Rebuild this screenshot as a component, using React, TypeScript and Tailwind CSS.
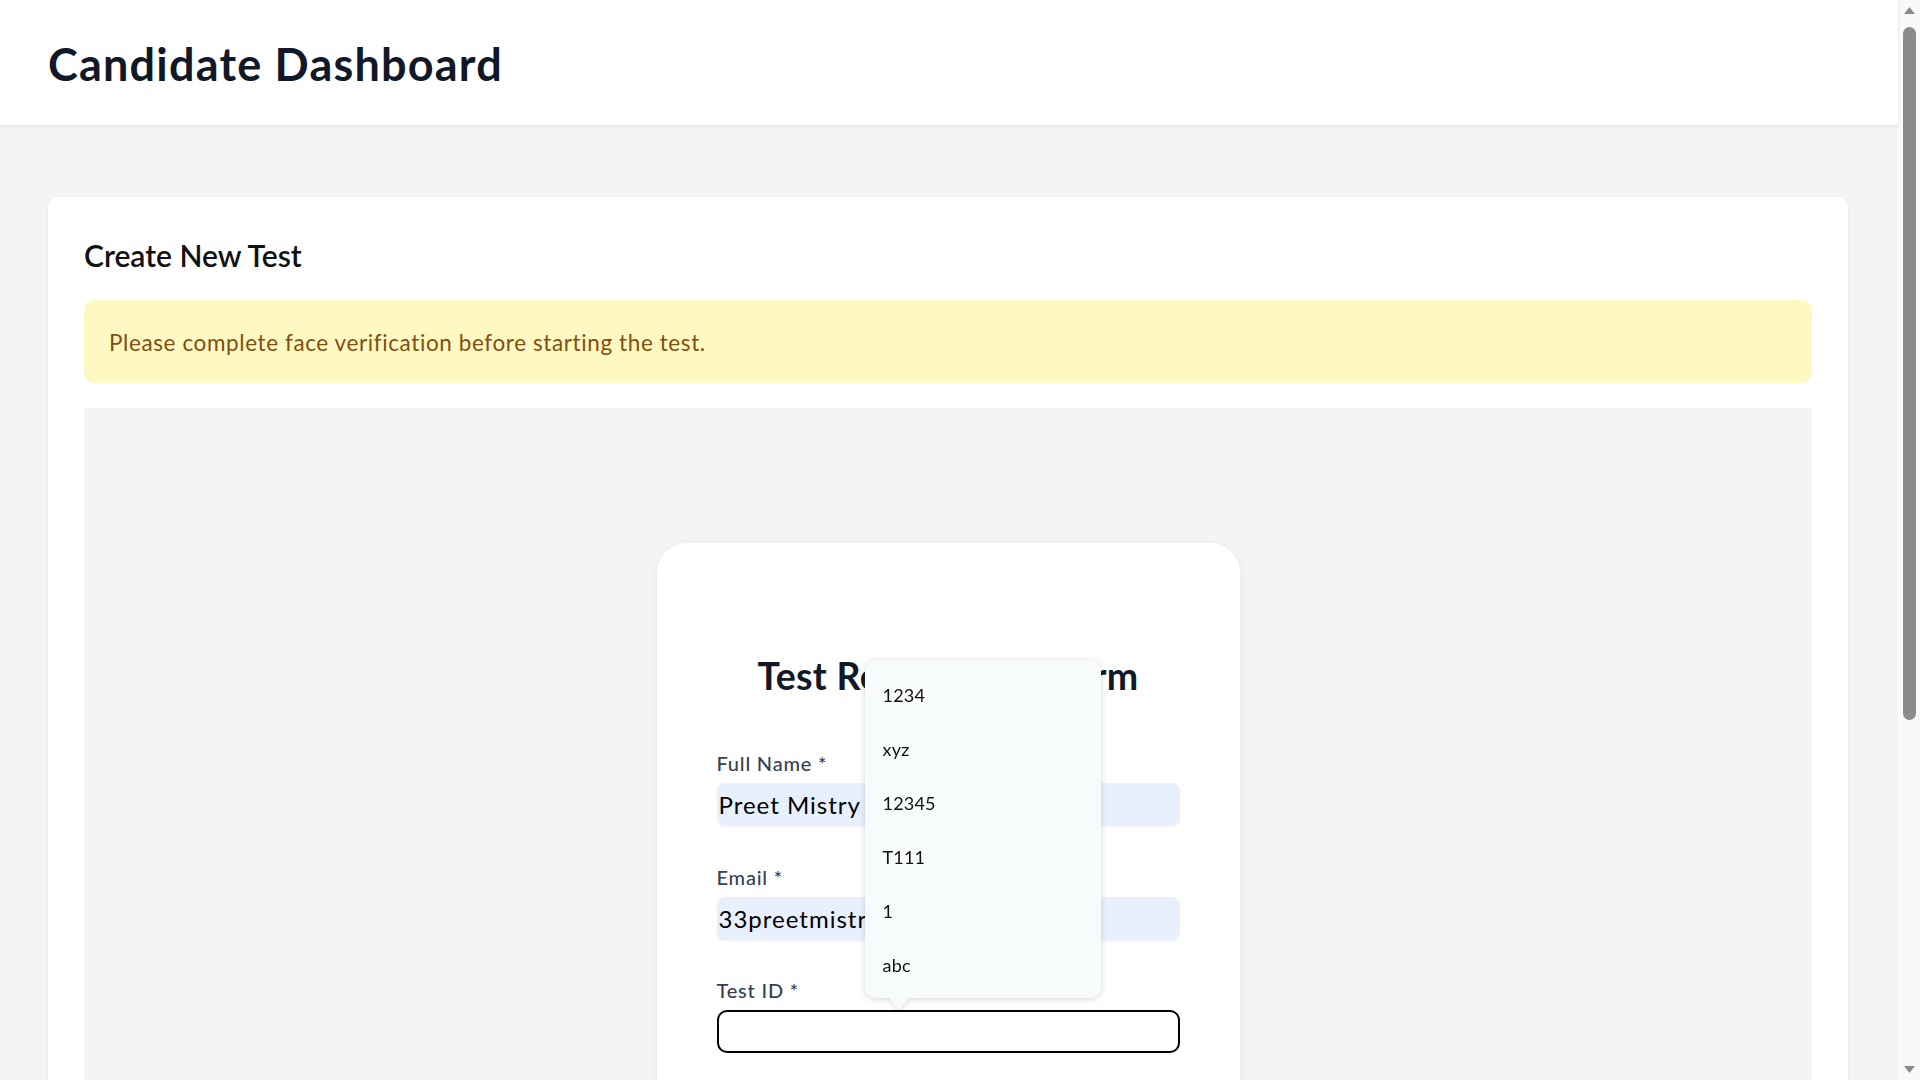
import React from "react";

const options = ["1234", "xyz", "12345", "T111", "1", "abc"];

function ScrollArrow({ down }: { down?: boolean }) {
  return (
    <div className="flex h-[21px] w-full items-center justify-center">
      <svg width="11" height="7" viewBox="0 0 11 7">
        {down ? (
          <polygon points="0,0 11,0 5.5,7" fill="#8b8b8b" />
        ) : (
          <polygon points="5.5,0 11,7 0,7" fill="#8b8b8b" />
        )}
      </svg>
    </div>
  );
}

function Label({ children }: { children: React.ReactNode }) {
  return (
    <label className="block h-[30px] text-[20px] leading-[30px] font-medium tracking-[0.8px] text-[#374151]">
      {children}
    </label>
  );
}

export default function App() {
  return (
    <div className="flex h-screen overflow-hidden bg-[#f3f4f6] font-['Lato','Open_Sans',sans-serif]">
      <div className="min-w-0 flex-1">
        <header className="relative z-10 flex h-[125px] items-center bg-white pl-12 pt-[4px] shadow-[0_1px_3px_rgba(0,0,0,0.1)]">
          <h1 className="text-[45px] leading-none font-bold tracking-[1.2px] text-[#111827]">Candidate Dashboard</h1>
        </header>

        <main className="pl-12 pr-[50px] pt-[72px] pb-12">
          <div className="rounded-[10px] bg-white px-[36px] pt-[38px] pb-[36px] shadow-[0_1px_3px_rgba(0,0,0,0.08)]">
            <h2 className="text-[30px] leading-[40px] font-semibold text-[#111111]">Create New Test</h2>

            <div className="mt-[25px] flex h-[83px] items-center rounded-[10px] bg-[#fef9c3] px-[25px] pt-[3px] text-[22.5px] tracking-[0.6px] text-[#854d0e]">
              Please complete face verification before starting the test.
            </div>

            <div className="mt-[25px] h-[1126px] bg-[#f3f4f6] pt-[135px]">
              <div className="relative mx-auto w-[583px] rounded-[30px] bg-white px-[60px] pt-[110px] pb-[60px] shadow-[0_2px_10px_rgba(0,0,0,0.05)]">
                <h1 className="text-center text-[37.5px] leading-[45px] font-bold tracking-[0.3px] text-[#111827]">
                  Test Registration Form
                </h1>

                <div className="mt-[50px]">
                  <Label>Full Name *</Label>
                  <input
                    readOnly
                    value="Preet Mistry"
                    className="mt-[5px] block h-[43px] w-full rounded-[8px] bg-[#e8f0fe] pl-[2px] text-[24px] tracking-[1px] text-black shadow-[0_1px_2px_rgba(0,0,0,0.06)] outline-none"
                  />
                </div>

                <div className="mt-[36px]">
                  <Label>Email *</Label>
                  <input
                    readOnly
                    value="33preetmistry@gmail.com"
                    className="mt-[5px] block h-[43px] w-full rounded-[8px] bg-[#e8f0fe] pl-[2px] text-[24px] tracking-[1px] text-black shadow-[0_1px_2px_rgba(0,0,0,0.06)] outline-none"
                  />
                </div>

                <div className="relative mt-[35px]">
                  <Label>Test ID *</Label>
                  <input
                    readOnly
                    value=""
                    className="mt-[5px] block h-[43px] w-full rounded-[10px] border-2 border-black bg-white px-3 text-[24px] text-black outline-none"
                  />

                  <div className="absolute bottom-[55px] left-[148px] z-20 w-[236px] drop-shadow-[0_1px_3px_rgba(0,0,0,0.16)]">
                    <div className="rounded-[10px] bg-[#f8fbfc] pt-[8px] pb-[6px]">
                      {options.map((o) => (
                        <div key={o} className="flex h-[54px] items-center pl-[18px] text-[18px] tracking-[0.2px] text-[#111111]">
                          {o}
                        </div>
                      ))}
                    </div>
                    <div className="absolute left-[24px] top-full h-0 w-0 border-x-[10px] border-t-[12px] border-x-transparent border-t-[#f8fbfc]" />
                  </div>
                </div>
              </div>
            </div>
          </div>
        </main>
      </div>

      <div className="flex h-full w-[22px] shrink-0 flex-col items-center bg-[#f9f9f9]">
        <ScrollArrow />
        <div className="mt-[6px] h-[693px] w-[13px] rounded-full bg-[#8b8b8b]" />
        <div className="flex-1" />
        <ScrollArrow down />
      </div>
    </div>
  );
}
